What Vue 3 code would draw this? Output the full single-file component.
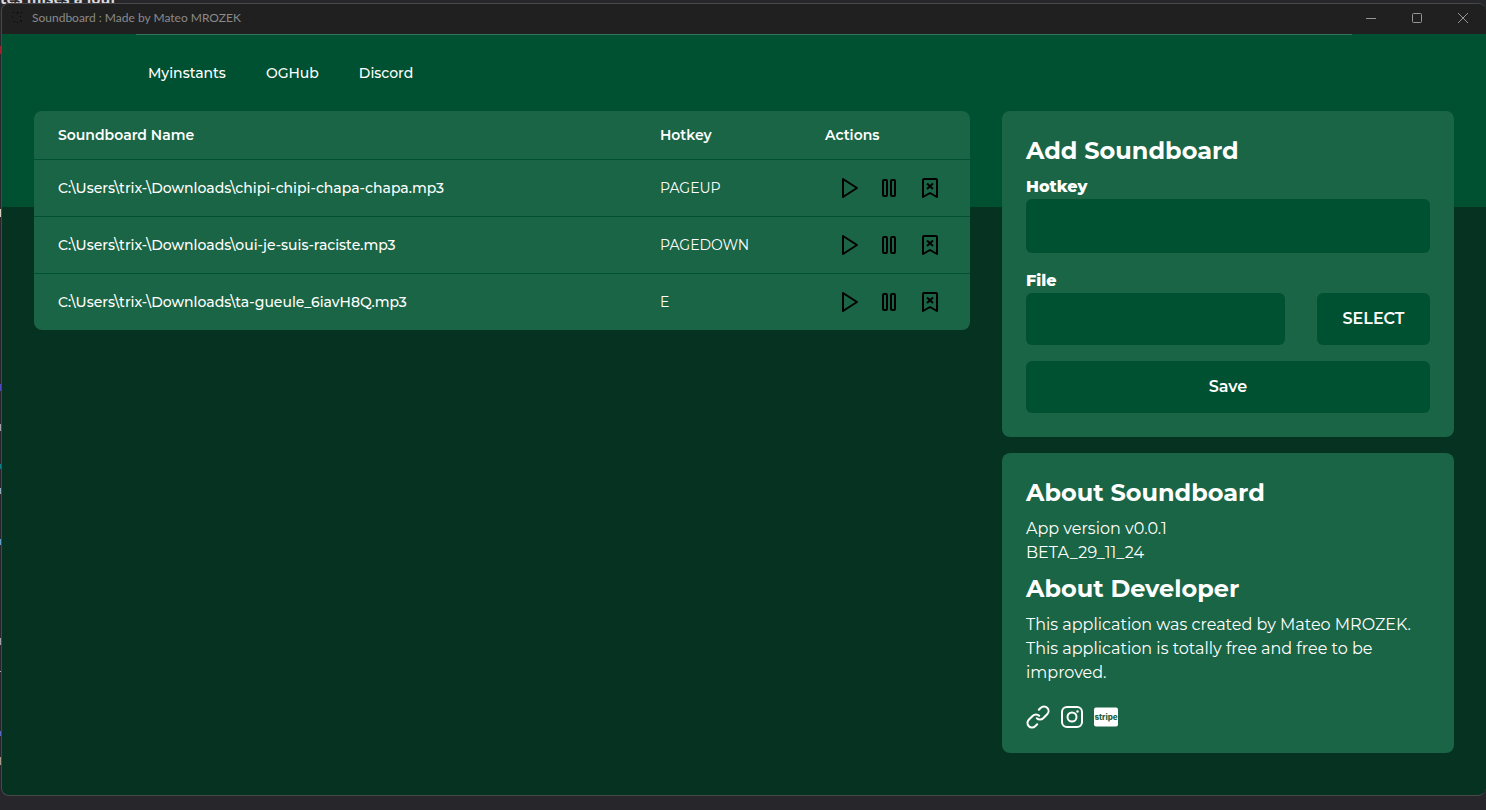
<script setup>
const links = ['Myinstants', 'OGHub', 'Discord']
const sounds = [
  { file: 'C:\\Users\\trix-\\Downloads\\chipi-chipi-chapa-chapa.mp3', key: 'PAGEUP' },
  { file: 'C:\\Users\\trix-\\Downloads\\oui-je-suis-raciste.mp3', key: 'PAGEDOWN' },
  { file: 'C:\\Users\\trix-\\Downloads\\ta-gueule_6iavH8Q.mp3', key: 'E' }
]
</script>

<template>
  <div class="desktop">
    <div class="behind">tes mises à jour</div>
    <div class="window">
      <header class="titlebar">
        <svg class="app-icon" viewBox="0 0 16 16" aria-hidden="true">
          <path d="M3 2l1 1M8 2l-1 2M11 3l1-1M2 7h1M10 6l1 1M4 11l1 1M7 13l1-1M11 10v2" />
        </svg>
        <span class="title">Soundboard : Made by Mateo MROZEK</span>
        <button class="win-btn" aria-label="Minimize">
          <svg viewBox="0 0 12 12"><path d="M1 6.5h10" /></svg>
        </button>
        <button class="win-btn" aria-label="Maximize">
          <svg viewBox="0 0 12 12"><rect x="1.5" y="1.5" width="9" height="9" rx="1" /></svg>
        </button>
        <button class="win-btn" aria-label="Close">
          <svg viewBox="0 0 12 12"><path d="M1 1l10 10M11 1L1 11" /></svg>
        </button>
      </header>

      <div class="app">
        <nav class="nav">
          <a v-for="l in links" :key="l" href="#">{{ l }}</a>
        </nav>

        <main class="grid">
          <section class="card list">
            <table>
              <thead>
                <tr>
                  <th class="c-name">Soundboard Name</th>
                  <th class="c-key">Hotkey</th>
                  <th class="c-act">Actions</th>
                </tr>
              </thead>
              <tbody>
                <tr v-for="s in sounds" :key="s.file">
                  <td class="file">{{ s.file }}</td>
                  <td>{{ s.key }}</td>
                  <td>
                    <div class="actions">
                      <button aria-label="Play">
                        <svg viewBox="0 0 24 24"><path d="M5 3l14 9-14 9z" /></svg>
                      </button>
                      <button aria-label="Pause">
                        <svg viewBox="0 0 24 24">
                          <rect x="5" y="4" width="4" height="16" rx="1" />
                          <rect x="13" y="4" width="4" height="16" rx="1" />
                        </svg>
                      </button>
                      <button aria-label="Remove">
                        <svg viewBox="0 0 24 24"><path d="M5 21V4a1 1 0 0 1 1-1h12a1 1 0 0 1 1 1v17l-7-4z" /><path d="M9 7.500l6 5.500M15 7.500l-6 5.500" /></svg>
                      </button>
                    </div>
                  </td>
                </tr>
              </tbody>
            </table>
          </section>

          <div class="side">
            <form class="card panel" @submit.prevent>
              <h2>Add Soundboard</h2>
              <label for="hotkey">Hotkey</label>
              <input id="hotkey" class="field tall" type="text" />
              <label for="file" class="spaced">File</label>
              <div class="file-row">
                <input id="file" class="field" type="text" />
                <button type="button" class="btn select">SELECT</button>
              </div>
              <button type="submit" class="btn save">Save</button>
            </form>

            <section class="card panel">
              <h2>About Soundboard</h2>
              <p>App version v0.0.1<br />BETA_29_11_24</p>
              <h2>About Developer</h2>
              <p>This application was created by Mateo MROZEK.<br />This application is totally free and free to be improved.</p>
              <div class="social">
                <a href="#" aria-label="Website">
                  <svg class="line" viewBox="0 0 24 24">
                    <path d="M13.200 10.800a4.500 4.500 0 0 0-6.400 0l-4 4a4.500 4.500 0 0 0 6.400 6.400l2-2" />
                    <path d="M10.800 13.200a4.500 4.500 0 0 0 6.400 0l4-4a4.500 4.500 0 0 0-6.400-6.400l-2 2" />
                  </svg>
                </a>
                <a href="#" aria-label="Instagram">
                  <svg class="line" viewBox="0 0 24 24">
                    <rect x="2" y="2" width="20" height="20" rx="5" />
                    <circle cx="12" cy="12" r="4.500" />
                    <circle class="dot" cx="17.500" cy="6.500" r="1.200" />
                  </svg>
                </a>
                <a href="#" aria-label="Stripe">
                  <svg viewBox="0 0 24 24">
                    <rect x="0" y="2.500" width="24" height="19" rx="2" fill="#fff" />
                    <text x="12" y="14.500" text-anchor="middle" class="stripe">stripe</text>
                  </svg>
                </a>
              </div>
            </section>
          </div>
        </main>
      </div>
    </div>
  </div>
</template>

<style>
body {
  margin: 0;
  background: #26262b;
}
</style>

<style scoped>
* {
  box-sizing: border-box;
}
.desktop {
  position: relative;
  display: flex;
  min-height: 100vh;
  padding: 3px 0 14px 1px;
  overflow: hidden;
  background:
    linear-gradient(#a02030 0 0) 0 46px / 2px 8px no-repeat,
    linear-gradient(#d8d0c0 0 0) 0 209px / 2px 8px no-repeat,
    linear-gradient(#5048c0 0 0) 0 384px / 2px 7px no-repeat,
    linear-gradient(#a0a0a4 0 0) 0 424px / 2px 7px no-repeat,
    linear-gradient(#108088 0 0) 0 464px / 2px 5px no-repeat,
    linear-gradient(#90a8b8 0 0) 0 488px / 2px 6px no-repeat,
    linear-gradient(#60a0c8 0 0) 0 539px / 2px 6px no-repeat,
    linear-gradient(#a0a0a4 0 0) 0 638px / 2px 7px no-repeat,
    linear-gradient(#b0b0b4 0 0) 0 671px / 2px 1px no-repeat,
    linear-gradient(#5868c0 0 0) 0 731px / 2px 5px no-repeat,
    linear-gradient(#a89888 0 0) 0 757px / 2px 8px no-repeat,
    #26262b;
  font-family: Montserrat, Inter, "Noto Sans", sans-serif;
  color: #fff;
}
.behind {
  position: absolute;
  left: 0;
  top: -12px;
  font: 700 15px/20px "Open Sans", sans-serif;
  color: #d8d8dc;
}
.window {
  position: relative;
  flex: 1;
  display: flex;
  flex-direction: column;
  min-width: 0;
  border: 1px solid #48484b;
  border-right: 0;
  border-radius: 8px;
  overflow: hidden;
  background: #063221;
}
.titlebar {
  display: flex;
  align-items: center;
  height: 30px;
  padding: 0 0 2px 8px;
  background: #202020;
  color: #8a8a8a;
}
.app-icon {
  width: 16px;
  height: 16px;
  margin-right: 6px;
  fill: none;
  stroke: #050505;
}
.title {
  flex: 1;
  font: 12px/16px "Segoe UI", Lato, sans-serif;
}
.win-btn {
  display: grid;
  place-items: center;
  width: 46px;
  height: 28px;
  padding: 0;
  border: 0;
  background: none;
}
.win-btn svg {
  width: 12px;
  height: 12px;
  fill: none;
  stroke: #969696;
}
.app {
  flex: 1;
  padding: 0 32px 32px;
  background: linear-gradient(#005131 0 0) 0 0 / 100% 173px no-repeat;
}
.nav {
  display: flex;
  align-items: center;
  gap: 16px;
  max-width: 1216px;
  height: 77px;
  margin: 0 auto;
  border-top: 1px solid #337359;
}
.nav a {
  padding: 8px 12px;
  color: #fff;
  font-size: 14px;
  line-height: 20px;
  font-weight: 500;
  text-decoration: none;
}
.grid {
  display: grid;
  grid-template-columns: repeat(12, minmax(0, 1fr));
  gap: 32px;
  align-items: start;
}
.card {
  border-radius: 8px;
  background: #1a6545;
}
.list {
  grid-column: span 8;
  overflow: hidden;
}
table {
  width: 100%;
  border-collapse: separate;
  border-spacing: 0;
  table-layout: fixed;
  text-align: left;
}
th {
  height: 49px;
  padding: 0 24px;
  border-bottom: 1px solid #005131;
  font-size: 14px;
  line-height: 20px;
  font-weight: 600;
}
.c-key {
  width: 165px;
}
.c-act {
  width: 169px;
}
td {
  height: 57px;
  padding: 0 24px;
  border-bottom: 1px solid #005131;
  font-size: 14px;
  line-height: 20px;
}
tr:last-child td {
  height: 56px;
  border-bottom: 0;
}
.file {
  font-weight: 500;
}
.actions {
  display: flex;
  gap: 16px;
  padding-left: 13px;
}
.actions button {
  padding: 0;
  border: 0;
  background: none;
}
.actions svg {
  display: block;
  width: 24px;
  height: 24px;
  fill: none;
  stroke: #000;
  stroke-width: 2;
  stroke-linejoin: round;
}
.side {
  grid-column: span 4;
  display: grid;
  gap: 16px;
}
.panel {
  padding: 24px;
}
h2 {
  margin: 0 0 8px;
  font-size: 24px;
  line-height: 32px;
  font-weight: 700;
}
label {
  display: block;
  font-size: 16px;
  line-height: 24px;
  font-weight: 800;
}
.spaced {
  margin-top: 16px;
}
.field,
.btn {
  display: block;
  width: 100%;
  height: 52px;
  padding: 0 16px;
  border: 0;
  border-radius: 6px;
  background: #005131;
  color: #fff;
  font: 600 16px/24px Montserrat, Inter, "Noto Sans", sans-serif;
}
.tall {
  height: 54px;
}
.file-row {
  display: flex;
  gap: 32px;
}
.file-row .field {
  flex: 1;
  min-width: 0;
}
.select {
  width: 113px;
}
.save {
  margin-top: 16px;
}
p {
  margin: 0 0 8px;
  font-size: 16px;
  line-height: 24px;
}
.social {
  display: flex;
  gap: 10px;
  margin-top: 20px;
}
.social svg {
  display: block;
  width: 24px;
  height: 24px;
}
.line {
  fill: none;
  stroke: #fff;
  stroke-width: 2;
  stroke-linecap: round;
}
.dot {
  fill: #fff;
  stroke: none;
}
.stripe {
  fill: #1a6545;
  font: 800 8px Inter, sans-serif;
}
</style>
